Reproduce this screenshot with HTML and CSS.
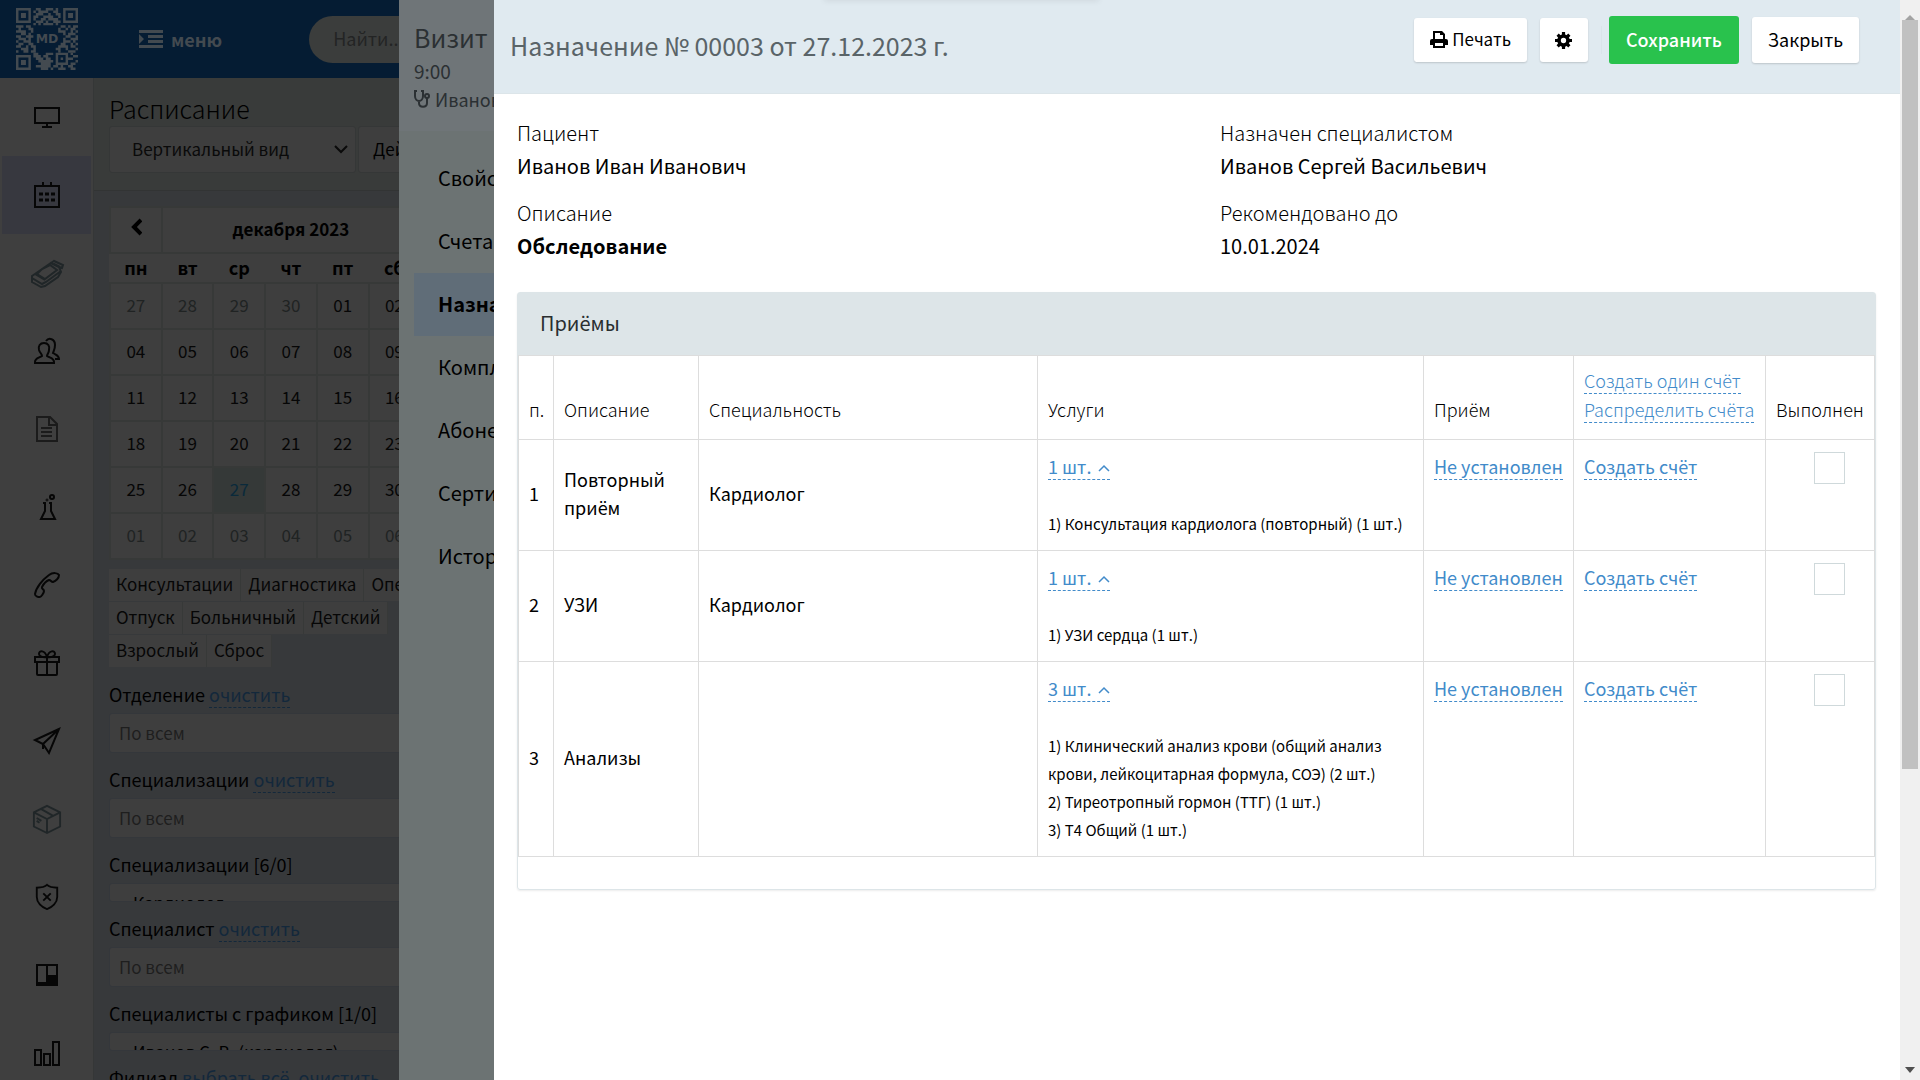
FILE: index.html
```html
<!DOCTYPE html>
<html lang="ru">
<head>
<meta charset="utf-8">
<meta name="viewport" content="width=device-width, initial-scale=1">
<title>Назначение № 00003</title>
<link rel="stylesheet" href="styles.css">
</head>
<body>
<div class="app">
  <header class="topbar">
    <svg class="logo" viewBox="0 0 25 25" role="img" aria-label="MD">
      <g fill="none" stroke="currentColor" stroke-width="1">
        <path d="M.5 .5h5v5h-5zM19.5 .5h5v5h-5zM.5 19.5h5v5h-5z"/>
        <path stroke-width="2" d="M2 3h2M21 3h2M2 22h2"/>
        <path d="M8 .5h2M12 .5h3M16 .5h1M7 1.5h1M9 1.5h4M15 1.5h2M8 2.5h3M13 2.5h1M16 2.5h2M7 3.5h2M11 3.5h4M17 3.5h1M7 4.5h1M10 4.5h2M13 4.5h4M8 5.5h3M12 5.5h1M15 5.5h3M7 6.5h1M9 6.5h1M11 6.5h4M16 6.5h1"/>
        <path d="M0 7.5h3M4 7.5h2M18 7.5h2M21 7.5h1M23 7.5h2M1 8.5h1M5 8.5h2M17 8.5h1M20 8.5h1M22 8.5h2M0 9.5h4M6 9.5h1M17 9.5h3M22 9.5h1M24 9.5h1M2 10.5h2M5 10.5h1M19 10.5h1M21 10.5h3M0 11.5h2M4 11.5h3M20 11.5h2M24 11.5h1M1 12.5h3M5 12.5h1M19 12.5h1M22 12.5h3M0 13.5h1M3 13.5h3M19 13.5h3M23 13.5h1M1 14.5h2M5 14.5h2M18 14.5h2M22 14.5h1M24 14.5h1M0 15.5h2M4 15.5h1M6 15.5h2M17 15.5h4M22 15.5h2M2 16.5h3M7 16.5h1M16 16.5h2M20 16.5h1M24 16.5h1M0 17.5h1M3 17.5h2M6 17.5h2M17 17.5h1M21 17.5h3"/>
        <path d="M7 18.5h2M12 18.5h3M16 18.5h5M22 18.5h1M7 19.5h3M11 19.5h2M16 19.5h1M20 19.5h1M23 19.5h2M8 20.5h3M12 20.5h2M16 20.5h1M18 20.5h1M20 20.5h3M9 21.5h6M16 21.5h1M20 21.5h1M24 21.5h1M10 22.5h4M16 22.5h5M22 22.5h2M8 23.5h6M15 23.5h2M18 23.5h1M21 23.5h2M10 24.5h3M14 24.5h1M17 24.5h3M22 24.5h2"/>
      </g>
      <text x="12.500" y="14" text-anchor="middle" class="logo-text">MD</text>
    </svg>
    <button class="menu-btn" type="button">
      <svg width="24" height="18" viewBox="0 0 24 18" fill="currentColor"><path d="M0 0h24v3H0zM9 5h15v3H9zM9 10h15v3H9zM0 15h24v3H0zM0 4l5 5-5 5z"/></svg>
      меню
    </button>
    <input class="search" type="search" placeholder="Найти..." aria-label="Найти">
  </header>
  <div class="frame">
    <nav class="sidebar" aria-label="Разделы">
      <a href="#" aria-label="Рабочий стол"><svg viewBox="0 0 26 26"><path d="M1 4h24v15H1zM13 19v4M8 23h10"/></svg></a>
      <a href="#" aria-label="Расписание" class="current"><svg viewBox="0 0 26 26"><path d="M1 4h24v21H1zM9 0v5M17 0v5"/><path stroke-width="3" d="M5 12h4M11 12h4M17 12h4M5 18h4M11 18h4M17 18h4"/></svg></a>
      <a href="#" aria-label="Оплата" class="pale"><svg class="wide" viewBox="0 0 32 26"><path d="M1 16L20 3l8 4 2 5-3 5-13 9-4 1-9-5zM1 18l10 6 4-2 15-11M4 14l10 6M11 9l-5 5 8 5 12-9-7-5zM20 3l3-2 9 4-1 3-3-1M23 4l6 3"/></svg></a>
      <a href="#" aria-label="Пациенты"><svg viewBox="0 0 26 26"><path d="M10 5c4 0 6 3 5 7 0 3-2 4-2 6 3 2 7 2 7 6v1H1v-1c0-4 4-4 7-6 0-2-2-3-3-6-1-4 1-7 5-7zM12 3c3-4 9-2 9 4 0 4-1 5-2 8 3 2 6 2 6 6h-4"/></svg></a>
      <a href="#" aria-label="Документы" class="soft"><svg viewBox="0 0 26 26"><path d="M3 1h13l7 7v17H3zM15 1v8h8M7 12h11M7 16h11M7 20h11"/></svg></a>
      <a href="#" aria-label="Анализы"><svg viewBox="0 0 26 26"><path d="M9 9h3M15 9h3M11 9v8l-4 8h14l-4-8V9"/><circle cx="18" cy="3" r="2"/><circle cx="13" cy="6" r="1" stroke-width="1"/></svg></a>
      <a href="#" aria-label="Звонки"><svg viewBox="0 0 26 26"><path d="M25 3c-1-2-6-3-10 0C8 8 2 16 1 22c0 2 3 3 5 3 1 0 4-4 4-6s-3-2-2-4 4-6 7-7c2 0 2 2 4 2 3-1 6-4 6-7z"/></svg></a>
      <a href="#" aria-label="Подарки"><svg viewBox="0 0 26 26"><path d="M1 7h24v5H1zM3 12v12q0 1 1 1h18q1 0 1-1V12M13 7v18M13 7C9 8 5 6 5 4c0-4 6-4 8 3 2-7 8-7 8-3 0 2-4 4-8 3"/></svg></a>
      <a href="#" aria-label="Рассылки"><svg viewBox="0 0 26 26"><path d="M25 1L1 12l8 4 6 9zM25 1L9 16v5"/></svg></a>
      <a href="#" aria-label="Склад" class="pale"><svg class="wide" viewBox="0 0 32 32"><path d="M16 2l14 7v15l-14 7-14-7V9zM2 9l14 7 14-7M16 16v15M9 5l14 8M5 15l5 3M5 18l3 2"/></svg></a>
      <a href="#" aria-label="Страховки"><svg viewBox="0 0 26 28"><path d="M13 1c3 3 7 3 11 3v10c0 6-5 11-11 13C7 25 2 20 2 14V4c4 0 8 0 11-3zM9 10l8 8M17 10l-8 8"/></svg></a>
      <a href="#" aria-label="Доска"><svg viewBox="0 0 26 26"><path d="M3 3h20v20H3zM13 3v20"/><path d="M13 14h10v9H13zM3 21h20v2H3z" fill="currentColor"/></svg></a>
      <a href="#" aria-label="Отчёты"><svg viewBox="0 0 26 26"><path d="M1 10h6v15H1zM10 14h6v11h-6zM19 2h6v23h-6z"/></svg></a>
    </nav>
    <main class="schedule">
      <section class="strip">
        <h1>Расписание</h1>
        <div class="strip-row">
          <select class="view-select" aria-label="Вид расписания"><option>Вертикальный вид</option></select>
          <button class="plain-btn" type="button">Действия</button>
        </div>
      </section>
      <section class="filters">
        <table class="calendar">
          <thead>
            <tr><th><button type="button" aria-label="Предыдущий месяц"><svg width="12" height="18" viewBox="0 0 12 18" fill="none" stroke="currentColor" stroke-width="4"><path d="M11 2L4 9l7 7"/></svg></button></th><th colspan="5" class="month">декабря 2023</th><th><button type="button" aria-label="Следующий месяц"><svg width="12" height="18" viewBox="0 0 12 18" fill="none" stroke="currentColor" stroke-width="4"><path d="M1 2l7 7-7 7"/></svg></button></th></tr>
            <tr class="days"><th>пн</th><th>вт</th><th>ср</th><th>чт</th><th>пт</th><th>сб</th><th>вс</th></tr>
          </thead>
          <tbody>
            <tr><td class="off">27</td><td class="off">28</td><td class="off">29</td><td class="off">30</td><td>01</td><td>02</td><td>03</td></tr>
            <tr><td>04</td><td>05</td><td>06</td><td>07</td><td>08</td><td>09</td><td>10</td></tr>
            <tr><td>11</td><td>12</td><td>13</td><td>14</td><td>15</td><td>16</td><td>17</td></tr>
            <tr><td>18</td><td>19</td><td>20</td><td>21</td><td>22</td><td>23</td><td>24</td></tr>
            <tr><td>25</td><td>26</td><td class="today">27</td><td>28</td><td>29</td><td>30</td><td>31</td></tr>
            <tr><td class="off">01</td><td class="off">02</td><td class="off">03</td><td class="off">04</td><td class="off">05</td><td class="off">06</td><td class="off">07</td></tr>
          </tbody>
        </table>
        <div class="tags">
          <div><button type="button">Консультации</button><button type="button">Диагностика</button><button type="button">Операции</button></div>
          <div><button type="button">Отпуск</button><button type="button">Больничный</button><button type="button">Детский</button></div>
          <div><button type="button">Взрослый</button><button type="button">Сброс</button></div>
        </div>
        <div class="field"><div class="field-head"><label for="dep">Отделение</label> <a href="#">очистить</a></div><input id="dep" type="text" placeholder="По всем"></div>
        <div class="field"><div class="field-head"><label for="spec">Специализации</label> <a href="#">очистить</a></div><input id="spec" type="text" placeholder="По всем"></div>
        <div class="field"><div class="field-head">Специализации [6/0]</div><div class="list">Кардиолог</div></div>
        <div class="field"><div class="field-head"><label for="doc">Специалист</label> <a href="#">очистить</a></div><input id="doc" type="text" placeholder="По всем"></div>
        <div class="field"><div class="field-head">Специалисты с графиком [1/0]</div><div class="list">Иванов С. В. (кардиолог)</div></div>
        <div class="field"><div class="field-head">Филиал <a href="#">выбрать всё</a>, <a href="#">очистить</a></div></div>
      </section>
    </main>
  </div>
</div>

<aside class="visit">
  <header>
    <h2>Визит</h2>
    <p>9:00</p>
    <p class="doctor"><svg width="16" height="18" viewBox="0 0 16 18" fill="none" stroke="currentColor" stroke-width="2"><path d="M3 1H1v5c0 3 2 5 4 5s4-2 4-5V1H7M5 11v2c0 5 8 5 8 0V8"/><circle cx="13" cy="6" r="2"/></svg>Иванов</p>
  </header>
  <nav aria-label="Визит">
    <a href="#">Свойства</a>
    <a href="#">Счета</a>
    <a href="#" class="current">Назначения</a>
    <a href="#">Комплексы</a>
    <a href="#">Абонементы</a>
    <a href="#">Сертификаты</a>
    <a href="#">История</a>
  </nav>
</aside>

<div class="drawer" role="dialog" aria-labelledby="title">
  <div class="sheet">
    <header class="sheet-head">
      <h2 id="title">Назначение № 00003 от 27.12.2023 г.</h2>
      <div class="actions">
        <button type="button" class="btn print"><svg width="18" height="17" viewBox="0 0 18 17"><path fill="currentColor" d="M3 0h9l3 3v5h1q2 0 2 2v4h-3v3H3v-3H0v-4q0-2 2-2h1zM5 2v6h8V4h-3V2zM5 12v3h8v-3z"/></svg>Печать</button>
        <button type="button" class="btn gear" aria-label="Настройки"><svg width="17" height="17" viewBox="0 0 16 16" fill="none" stroke="currentColor"><circle cx="8" cy="8" r="4.200" stroke-width="3.400"/><path stroke-width="3" d="M8 0v3M8 13v3M0 8h3M13 8h3M2.500 2.500l2 2M11.500 11.500l2 2M13.500 2.500l-2 2M4.500 11.500l-2 2"/></svg></button>
        <span class="divider"></span>
        <button type="submit" class="btn save">Сохранить</button>
        <button type="button" class="btn close">Закрыть</button>
      </div>
      <div class="toast-edge"></div>
    </header>
    <dl class="facts">
      <div><dt>Пациент</dt><dd>Иванов Иван Иванович</dd></div>
      <div><dt>Назначен специалистом</dt><dd>Иванов Сергей Васильевич</dd></div>
      <div><dt>Описание</dt><dd class="strong">Обследование</dd></div>
      <div><dt>Рекомендовано до</dt><dd>10.01.2024</dd></div>
    </dl>
    <section class="panel">
      <h3>Приёмы</h3>
      <table class="visits">
        <colgroup><col class="c-num"><col class="c-desc"><col><col class="c-serv"><col class="c-slot"><col class="c-bill"><col class="c-done"></colgroup>
        <thead>
          <tr><th>п.</th><th>Описание</th><th>Специальность</th><th>Услуги</th><th>Приём</th><th><a href="#">Создать один счёт</a><br><a href="#">Распределить счёта</a></th><th>Выполнен</th></tr>
        </thead>
        <tbody>
          <tr>
            <td>1</td><td>Повторный приём</td><td>Кардиолог</td>
            <td class="top"><a href="#">1 шт.<svg class="caret" viewBox="0 0 12 8"><path d="M1 7l5-5 5 5"/></svg></a><ol><li>1) Консультация кардиолога (повторный) (1 шт.)</li></ol></td>
            <td class="top"><a href="#">Не установлен</a></td><td class="top"><a href="#">Создать счёт</a></td>
            <td class="top done"><input type="checkbox" aria-label="Выполнен: 1"></td>
          </tr>
          <tr>
            <td>2</td><td>УЗИ</td><td>Кардиолог</td>
            <td class="top"><a href="#">1 шт.<svg class="caret" viewBox="0 0 12 8"><path d="M1 7l5-5 5 5"/></svg></a><ol><li>1) УЗИ сердца (1 шт.)</li></ol></td>
            <td class="top"><a href="#">Не установлен</a></td><td class="top"><a href="#">Создать счёт</a></td>
            <td class="top done"><input type="checkbox" aria-label="Выполнен: 2"></td>
          </tr>
          <tr>
            <td>3</td><td>Анализы</td><td></td>
            <td class="top"><a href="#">3 шт.<svg class="caret" viewBox="0 0 12 8"><path d="M1 7l5-5 5 5"/></svg></a><ol><li>1) Клинический анализ крови (общий анализ крови, лейкоцитарная формула, СОЭ) (2 шт.)</li><li>2) Тиреотропный гормон (ТТГ) (1 шт.)</li><li>3) Т4 Общий (1 шт.)</li></ol></td>
            <td class="top"><a href="#">Не установлен</a></td><td class="top"><a href="#">Создать счёт</a></td>
            <td class="top done"><input type="checkbox" aria-label="Выполнен: 3"></td>
          </tr>
        </tbody>
      </table>
    </section>
  </div>
  <div class="scrollbar" aria-hidden="true"><i class="up"></i><span class="track"><span class="thumb"></span></span><i class="down"></i></div>
</div>
</body>
</html>
```
FILE: styles.css
```css
* { box-sizing: border-box; }
html, body { height: 100%; }
body {
  margin: 0;
  overflow: hidden;
  background: #37393b;
  color: #000;
  font: 18px/28px "Noto Sans CJK JP", "Noto Sans", sans-serif;
}
h1, h2, h3, p, dl, dd, ol { margin: 0; padding: 0; }
button, input, select { font: inherit; color: inherit; margin: 0; }
button { cursor: pointer; }
a { color: inherit; text-decoration: none; }

/* Application behind the drawers */
.app { height: 100%; display: flex; flex-direction: column; overflow: hidden; }
.topbar {
  flex: none;
  display: flex;
  align-items: center;
  height: 78px;
  padding-left: 16px;
  background: #051c33;
  color: #434a50;
}
.logo { width: 62px; height: 62px; }
.logo-text { font: bold 5px "DejaVu Sans", sans-serif; fill: currentColor; }
.menu-btn {
  display: flex;
  align-items: center;
  gap: 8px;
  margin-left: 61px;
  padding: 0;
  border: 0;
  background: none;
  font-size: 18px;
  font-weight: 700;
}
.search {
  width: 300px;
  height: 47px;
  margin-left: 87px;
  padding: 0 24px 2px;
  border: 0;
  border-radius: 24px;
  background: #3b3d3c;
}
.search::placeholder { color: #232424; opacity: 1; }
.frame { flex: 1; display: flex; min-height: 0; }
.sidebar {
  flex: none;
  width: 94px;
  padding: 0 2px;
  border-right: 1px solid #353737;
  background: #3f3f3f;
  color: #060606;
  overflow: hidden;
}
.sidebar a { display: flex; align-items: center; justify-content: center; height: 78px; }
.sidebar .current { background: #37383f; }
.sidebar .pale { color: #202628; }
.sidebar .soft { color: #1b1b1b; }
.sidebar svg { width: 26px; height: 26px; fill: none; stroke: currentColor; stroke-width: 2; overflow: visible; }
.sidebar .wide { width: 32px; height: 30px; }
.schedule { flex: 1; min-width: 0; overflow: hidden; }
.strip {
  height: 113px;
  padding: 13px 15px 0;
  border-bottom: 1px solid #323434;
  background: #393b3a;
}
.strip h1 { font-size: 25px; line-height: 35px; font-weight: 300; }
.strip-row { display: flex; gap: 2px; }
.view-select {
  width: 247px;
  height: 47px;
  padding: 0 22px 2px;
  appearance: none;
  border: 1px solid #353737;
  border-radius: 3px;
  background: #3e3e3e url("data:image/svg+xml,%3Csvg xmlns='http://www.w3.org/2000/svg' width='14' height='9'%3E%3Cpath d='M1 1l6 6 6-6' fill='none' stroke='%230a0a0a' stroke-width='2'/%3E%3C/svg%3E") no-repeat right 7px center;
  color: #0a0a0a;
  font-size: 17px;
}
.plain-btn {
  padding: 0 14px 2px;
  border: 1px solid #353737;
  border-radius: 3px;
  background: #3e3e3e;
  font-size: 17px;
}
.filters { padding: 15px 15px 0; }
.calendar {
  table-layout: fixed;
  width: 364px;
  border-collapse: collapse;
  background: #3e3e3e;
  font-size: 17px;
  line-height: 24px;
  text-align: center;
}
.calendar th, .calendar td { height: 46px; padding: 0 0 2px; border: 2px solid #373938; }
.calendar td { color: #060606; }
.calendar .days th { height: 30px; border: 0; font-size: 18px; }
.calendar button { border: 0; padding: 0; background: none; }
.calendar svg { display: block; }
.calendar .off { color: #202323; }
.calendar .today { background: #353938; color: #0a2a3b; }
.tags { margin: 9px 0 10px; font-size: 17px; }
.tags div { display: flex; height: 33px; white-space: nowrap; }
.tags button {
  height: 32px;
  padding: 0 7px 2px;
  border: 0;
  border-right: 1px solid #373938;
  background: #3e3e3e;
  color: #060606;
}
.field { margin-bottom: 10px; }
.field-head { height: 35px; line-height: 33px; white-space: nowrap; }
.field-head a { border-bottom: 1px dashed; color: #13283b; }
.field input, .list {
  display: block;
  width: 364px;
  height: 40px;
  padding: 0 9px 2px;
  border: 1px solid #34373b;
  border-radius: 3px;
  background: #3e3e3e;
  font-size: 17px;
}
.field input::placeholder { color: #1e1e1e; opacity: 1; }
.field .list { height: 19px; padding: 5px 23px; overflow: hidden; }

/* Visit drawer */
.visit {
  position: fixed;
  inset: 0 0 0 399px;
  background: #6c7373;
  overflow: hidden;
}
.visit header { height: 131px; padding: 17px 15px; background: #6f7578; color: #2b3033; }
.visit h2 { font-size: 25px; line-height: 40px; font-weight: 400; }
.visit p { font-size: 19px; line-height: 28px; }
.visit .doctor { display: flex; align-items: center; gap: 5px; font-size: 18px; }
.visit nav { padding: 16px 15px; font-size: 20px; }
.visit nav a { display: block; height: 63px; padding-left: 24px; line-height: 61px; }
.visit .current { background: #606d78; font-weight: 700; }

/* Prescription drawer */
.drawer { position: fixed; inset: 0 0 0 494px; display: flex; background: #fff; }
.sheet { flex: 1; min-width: 0; }
.sheet-head {
  position: relative;
  display: flex;
  justify-content: space-between;
  height: 94px;
  padding: 16px 41px 0 16px;
  border-bottom: 1px solid #dce5e9;
  background: #e0eaf0;
}
.sheet-head h2 { color: #5a6468; font-size: 25px; line-height: 58px; font-weight: 400; }
.toast-edge {
  position: absolute;
  top: -20px;
  left: 330px;
  width: 275px;
  height: 20px;
  box-shadow: 0 1px 6px rgba(0, 0, 0, .08);
}
.actions { display: flex; align-items: center; gap: 13px; height: 48px; }
.btn {
  display: flex;
  align-items: center;
  justify-content: center;
  gap: 4px;
  height: 44px;
  padding: 0 16px 2px;
  border: 0;
  border-radius: 3px;
  background: #fff;
  box-shadow: 0 1px 2px rgba(0, 0, 0, .16);
}
.print { font-size: 17px; }
.gear { width: 48px; padding: 0; }
.divider { width: 1px; height: 28px; margin-right: -6px; background: #dae4ea; }
.save { height: 48px; padding: 0 17px 2px; background: #29c24d; box-shadow: none; color: #fff; font-weight: 500; }
.close { height: 46px; }
.facts { display: grid; grid-template-columns: 1fr 1fr; row-gap: 14px; padding-top: 22px; font-size: 20px; line-height: 33px; }
.facts > div { padding: 0 24px 0 23px; }
.facts dt { font-weight: 300; }
.facts .strong { font-weight: 700; }
.panel {
  margin: 30px 24px 0 23px;
  padding-bottom: 32px;
  border: 1px solid #dde5e8;
  border-radius: 3px;
  box-shadow: 0 1px 2px rgba(0, 0, 0, .08);
}
.panel h3 {
  height: 62px;
  padding-left: 22px;
  background: #dde5e8;
  color: #2a2e30;
  font-size: 20px;
  line-height: 60px;
  font-weight: 400;
}
.visits { table-layout: fixed; width: 100%; border-collapse: collapse; }
.visits th, .visits td { padding: 10px 10px 14px; border: 1px solid #ddd; text-align: left; vertical-align: middle; }
.visits th { height: 84px; padding: 8px 0 15px 10px; line-height: 29px; font-weight: 300; vertical-align: bottom; white-space: nowrap; }
.visits .top { padding: 12px 10px; vertical-align: top; }
.visits a { border-bottom: 1px dashed #428bca; color: #428bca; white-space: nowrap; }
.c-num { width: 35px; }
.c-desc { width: 145px; }
.c-serv { width: 386px; }
.c-slot { width: 150px; }
.c-bill { width: 192px; }
.c-done { width: 109px; }
.caret { width: 12px; height: 8px; margin-left: 7px; vertical-align: 2px; fill: none; stroke: currentColor; stroke-width: 1.500; }
.visits ol { margin-top: 30px; padding-right: 10px; list-style: none; font-size: 15px; }
.visits .done { padding-right: 0; padding-left: 18px; text-align: center; }
.visits input {
  display: inline-block;
  width: 31px;
  height: 32px;
  appearance: none;
  border: 1px solid #cfd9db;
  background: #fff;
  vertical-align: top;
}
.scrollbar { flex: none; display: flex; flex-direction: column; width: 20px; background: #f0f0f0; align-items: center; }
.scrollbar i { height: 20px; border: 5px solid transparent; }
.scrollbar .up { border-bottom-color: #a3a3a3; }
.scrollbar .down { border-top: 6px solid #505050; margin-top: 7px; height: 13px; }
.track { flex: 1; width: 16px; }
.thumb { display: block; height: 72%; background: #c1c1c1; }
```
